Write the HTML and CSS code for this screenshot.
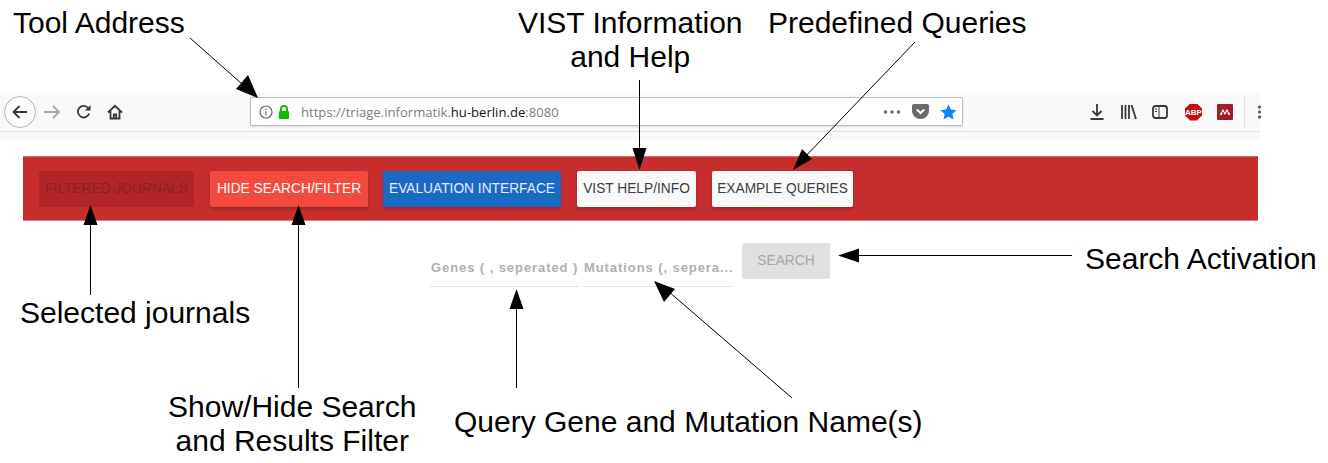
FILE: index.html
```html
<!DOCTYPE html>
<html lang="en">
<head>
<meta charset="utf-8">
<title>VIST annotated toolbar</title>
<link rel="stylesheet" href="styles.css">
</head>
<body>
<main class="stage">
  <div class="browser">
    <div class="nav-icons">
      <span class="back"><svg width="30" height="30" viewBox="0 0 30 30"><path d="M22 15H9M14.5 9 8.5 15l6 6" class="ic ic-dark"/></svg></span>
      <svg class="fwd" width="18" height="16" viewBox="0 0 18 16"><path d="M1 8h15M10 2l6 6-6 6" class="ic ic-grey"/></svg>
      <svg class="reload" width="16" height="16" viewBox="0 0 16 16"><path d="M13.2 9.5A5.8 5.8 0 1 1 12.2 4" class="ic ic-dark"/><path d="M14.5 1v5.5H9z" class="fill-dark"/></svg>
      <svg class="home" width="16" height="16" viewBox="0 0 16 16"><path d="M1 8.5 8 1.8l7 6.7M3.5 7v7.5h9V7" class="ic ic-dark"/><path d="M6.8 14.5v-4h2.4v4" class="ic ic-dark"/></svg>
    </div>
    <div class="urlbar">
      <svg class="info" width="14" height="14" viewBox="0 0 14 14"><circle cx="7" cy="7" r="6" class="ic-thin"/><path d="M7 6.2v4M7 3.4v1.5" class="ic-thin"/></svg>
      <svg class="lock" width="12" height="14" viewBox="0 0 12 14"><path d="M3 6V4a3 3 0 0 1 6 0v2" class="ic-lock"/><rect x="1" y="6" width="10" height="8" rx="1" class="fill-lock"/></svg>
      <span class="url">https://triage.informatik.<b>hu-berlin.de</b>:8080</span>
      <span class="url-actions">
        <svg width="18" height="4" viewBox="0 0 18 4"><circle cx="2.5" cy="2" r="1.7" class="fill-grey"/><circle cx="9" cy="2" r="1.7" class="fill-grey"/><circle cx="15.5" cy="2" r="1.7" class="fill-grey"/></svg>
        <svg width="17" height="15" viewBox="0 0 17 15"><path d="M2 0h13a2 2 0 0 1 2 2v5a8.500 8 0 0 1-17 0V2a2 2 0 0 1 2-2z" class="fill-grey"/><path d="m4.800 5.500 3.700 3.500 3.700-3.500" class="ic-white"/></svg>
        <svg width="17" height="16" viewBox="0 0 17 16"><path d="m8.500.5 2.400 5 5.600.7-4.100 3.800 1.100 5.500-5-2.800-5 2.800 1.100-5.500L.5 6.200l5.600-.7z" class="fill-blue"/></svg>
      </span>
    </div>
    <div class="tools">
      <svg width="14" height="16" viewBox="0 0 14 16"><path d="M7 0v11M2.500 7 7 11.500 11.500 7M.5 15h13" class="ic ic-dark"/></svg>
      <svg width="16" height="14" viewBox="0 0 16 14"><path d="M1 0v14M4.500 0v14M8 0v14M10.500 0l4.500 14" class="ic ic-dark"/></svg>
      <svg width="16" height="14" viewBox="0 0 16 14"><rect x="1" y="1" width="14" height="12" rx="2.500" class="ic ic-dark"/><path d="M7 1v12M3 4h2M3 6.500h2" class="ic-hair"/></svg>
      <span class="abp">ABP</span>
      <span class="mendeley"><svg width="12" height="7" viewBox="0 0 12 7"><path d="M1.500 6 4 1.500 6 4.500 8 1.500 10.500 6" class="ic-mark"/></svg></span>
      <span class="divider"></span>
      <svg class="kebab" width="4" height="14" viewBox="0 0 4 14"><circle cx="1.500" cy="2" r="1.500" class="fill-grey-dark"/><circle cx="1.500" cy="7" r="1.500" class="fill-grey-dark"/><circle cx="1.500" cy="12" r="1.500" class="fill-grey-dark"/></svg>
    </div>
  </div>
  <div class="browser-shadow"></div>

  <header class="appbar">
    <button class="btn btn-muted">Filtered Journals</button>
    <button class="btn btn-red">Hide Search/Filter</button>
    <button class="btn btn-blue">Evaluation Interface</button>
    <button class="btn btn-white btn-help">Vist Help/Info</button>
    <button class="btn btn-white btn-examples">Example Queries</button>
  </header>

  <section class="search">
    <div class="field">Genes ( , seperated )</div>
    <div class="field">Mutations (, sepera...</div>
    <button class="btn btn-search">Search</button>
  </section>

  <svg class="arrows" width="1328" height="463" viewBox="0 0 1328 463">
    <g class="lines">
      <path d="M190 38 250 91"/>
      <path d="M639.500 80V155"/>
      <path d="M915 42 802 160"/>
      <path d="M90.500 295V225"/>
      <path d="M298.500 388V225"/>
      <path d="M516.500 388V305"/>
      <path d="M792 398 668 291"/>
      <path d="M1072 255.500H855"/>
    </g>
    <g class="heads">
      <polygon points="258,98 236,89 248,75"/>
      <polygon points="639.500,170 632.500,148 646.500,148"/>
      <polygon points="793,170 802,149 812,159"/>
      <polygon points="90.500,205 83.500,225 97.500,225"/>
      <polygon points="298.500,205 291.500,225 305.500,225"/>
      <polygon points="516.500,289 509.500,309 523.500,309"/>
      <polygon points="654,281 675,289 664,302"/>
      <polygon points="838,255.500 859,248.500 859,262.500"/>
    </g>
  </svg>

  <p class="note n-tool">Tool Address</p>
  <p class="note n-vist">VIST Information<br>and Help</p>
  <p class="note n-pre">Predefined Queries</p>
  <p class="note n-sel">Selected journals</p>
  <p class="note n-show">Show/Hide Search<br>and Results Filter</p>
  <p class="note n-query">Query Gene and Mutation Name(s)</p>
  <p class="note n-search">Search Activation</p>
</main>
</body>
</html>
```

FILE: styles.css
```css
* { box-sizing: border-box; }
html, body { margin: 0; padding: 0; background: #fff; }
.stage { position: relative; width: 1328px; height: 463px; overflow: hidden; padding-top: 93px; font-family: "Liberation Sans", Arial, sans-serif; }

/* browser chrome */
.browser { width: 1260px; height: 39px; background: #f9f9fa; border-bottom: 1px solid #e1e1e2; display: flex; align-items: flex-start; padding-top: 4px; }
.browser-shadow { width: 1260px; height: 8px; background: #f9f9fa; }
.nav-icons { flex: none; width: 250px; display: flex; align-items: center; height: 30px; padding-left: 4px; }
.back { width: 32px; height: 32px; border: 1px solid #b9b9ba; border-radius: 50%; background: #fdfdfd; display: flex; align-items: center; justify-content: center; }
.fwd { margin-left: 7px; }
.reload { margin-left: 15px; }
.home { margin-left: 15px; }
.ic { fill: none; stroke-width: 1.8; }
.ic-dark { stroke: #38383d; }
.ic-grey { stroke: #a8a8aa; }
.fill-dark { fill: #38383d; }
.ic-thin { fill: none; stroke: #68686c; stroke-width: 1.2; }
.ic-lock { fill: none; stroke: #12bc00; stroke-width: 2; }
.fill-lock { fill: #12bc00; }
.fill-grey { fill: #6a6a6e; }
.fill-grey-dark { fill: #4a4a4f; }
.fill-blue { fill: #0a84ff; }
.ic-white { fill: none; stroke: #fff; stroke-width: 2; }
.ic-mark { fill: none; stroke: #fff; stroke-width: 1.7; stroke-dasharray: 3 .6; }
.ic-hair { fill: none; stroke: #38383d; stroke-width: 1; }

.urlbar { flex: none; width: 713px; height: 29px; background: #fff; border: 1px solid #bdbdbf; border-radius: 2px; box-shadow: 0 1px 2px rgba(0,0,0,.12); display: flex; align-items: center; padding-left: 8px; }
.info { margin-right: 5px; }
.lock { margin-right: 11px; }
.url { font-family: "Open Sans", sans-serif; font-size: 13.100px; color: #7d7d82; white-space: nowrap; }
.url b { font-weight: 400; color: #111118; }
.url-actions { margin-left: auto; display: flex; align-items: center; gap: 11px; padding-right: 5px; }

.tools { flex: 1; display: flex; align-items: center; height: 30px; padding-left: 127px; }
.tools > svg:nth-child(2) { margin-left: 17px; }
.tools > svg:nth-child(3) { margin-left: 15px; }
.abp { margin-left: 17px; width: 17px; height: 17px; background: #c70d0d; clip-path: polygon(30% 0, 70% 0, 100% 30%, 100% 70%, 70% 100%, 30% 100%, 0 70%, 0 30%); color: #fff; font-size: 8px; font-weight: 700; display: flex; align-items: center; justify-content: center; }
.mendeley { margin-left: 15px; width: 16px; height: 16px; border-radius: 1px; background: #a01d26; display: flex; align-items: center; justify-content: center; }
.divider { margin-left: 11px; width: 1px; height: 32px; background: #e0e0e1; }
.kebab { margin-left: 13px; }

/* app bar */
.appbar { margin: 16px 0 0 23px; width: 1235px; height: 65px; background: #c62e2e; border-top: 1px solid #dd6a6a; border-bottom: 1px solid #e08080; display: flex; align-items: center; gap: 16px; padding-left: 16px; }
.btn { border: 0; height: 36px; padding: 0 0 1px; border-radius: 2px; font-family: "Liberation Sans", Arial, sans-serif; font-size: 13.750px; font-weight: 400; text-transform: uppercase; white-space: nowrap; box-shadow: 0 2px 3px rgba(0,0,0,.22); }
.btn-muted { background: #b02626; color: #8c2020; box-shadow: none; width: 155px; }
.btn-red { background: #f44a3e; color: #fff; width: 158px; }
.btn-blue { background: #1a69c4; color: #e3eefb; width: 178px; margin-left: -1px; }
.btn-white { background: #fafafa; color: #3c3c44; }
.btn-help { width: 119px; }
.btn-examples { width: 141px; }

/* search row */
.search { display: flex; align-items: flex-start; margin: 22px 0 0 430px; }
.field { width: 149px; height: 44px; margin-right: 4px; padding-top: 17px; padding-left: 1px; border-bottom: 1px solid #e4e4e4; font-size: 13px; line-height: 16px; font-weight: 700; letter-spacing: .92px; color: #b0b0b0; white-space: nowrap; }
.btn-search { margin-left: 6px; width: 88px; background: #e0e0e0; color: #a6a6a6; box-shadow: none; line-height: 34px; }

/* annotations */
.arrows { position: absolute; left: 0; top: 0; }
.lines path { fill: none; stroke: #000; stroke-width: 1; }
.heads polygon { fill: #000; }
.note { position: absolute; margin: 0; font-size: 30px; line-height: 34px; color: #000; white-space: nowrap; text-align: center; }
.n-tool { left: 13px; top: 6px; }
.n-vist { left: 518px; top: 6px; }
.n-pre { left: 768px; top: 6px; }
.n-sel { left: 20px; top: 296px; }
.n-show { left: 168px; top: 390px; }
.n-query { left: 454px; top: 405px; }
.n-search { left: 1085px; top: 242px; }
```
